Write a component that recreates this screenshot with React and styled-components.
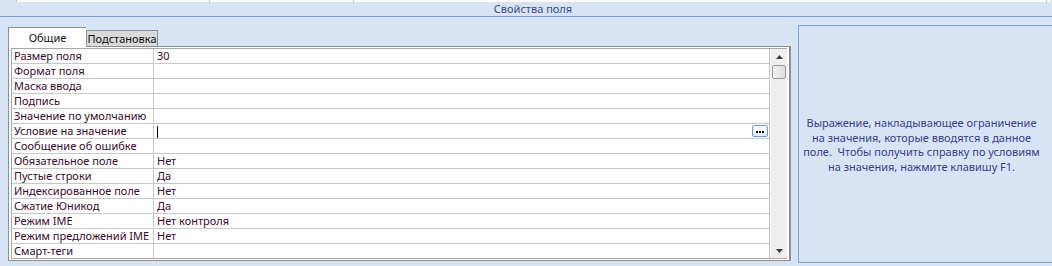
import React from "react";
import styled, { createGlobalStyle } from "styled-components";

const Global = createGlobalStyle`
  html, body { margin: 0; padding: 0; }
  body {
    width: 1052px; height: 266px; overflow: hidden;
    background: #d6e4f3;
    font-family: "Noto Sans", "Liberation Sans", sans-serif;
  }
`;

const Page = styled.div`
  width: 1052px; height: 266px; overflow: hidden;
  background: #d6e4f3;
  display: flex; flex-direction: column;
`;

const TopStrip = styled.div`
  height: 2px; display: flex;
`;
const StripCell = styled.div`
  width: ${p => p.$w}px; flex: ${p => (p.$grow ? 1 : "none")};
  background: ${p => (p.$blue ? "#d6e4f3" : "#ffffff")};
  border-right: 1px solid #c9cdd3;
`;

const Header = styled.div`
  height: 14px;
  border-bottom: 1px solid #7ea2d4;
  display: flex; align-items: center; justify-content: center;
  padding-left: 14px;
  font-size: 11px; line-height: 14px; color: #3c4a8c;
`;

const Body = styled.div`
  display: flex; align-items: flex-start;
  padding: 8px 0 0 8px;
`;

const LeftCol = styled.div`
  width: 783px; display: flex; flex-direction: column;
`;

const TabBar = styled.div`
  display: flex; align-items: flex-end;
  height: 20px; margin-top: 1px;
`;

const Tab = styled.div`
  height: ${p => (p.$active ? 20 : 16)}px;
  width: ${p => p.$w}px;
  box-sizing: border-box;
  border: 1px solid #8f8f8f;
  border-bottom: none;
  ${p => (p.$active ? "border-right: none;" : "")}
  background: ${p => (p.$active ? "#ffffff" : "#dadada")};
  display: flex; align-items: center; justify-content: center;
  font-size: 11px; line-height: 13px; color: #111111; white-space: nowrap;
  margin-bottom: ${p => (p.$active ? -1 : 0)}px;
  position: relative; z-index: ${p => (p.$active ? 1 : 0)};
`;

const Panel = styled.div`
  width: 783px; height: 215px; box-sizing: border-box;
  background: #ffffff;
  border: 1px solid #8f8f8f;
  border-right-width: 2px;
  padding: 1px 2px 2px 2px;
  display: flex;
`;

const Grid = styled.div`
  flex: 1; display: flex;
  border: 1px solid #a8a8a8;
  border-right: none;
  height: 211px; box-sizing: border-box;
`;

const Rows = styled.div`
  flex: 1; display: flex; flex-direction: column;
  border-right: 1px solid #c2c2c2;
`;

const Row = styled.div`
  height: 15px; box-sizing: border-box;
  border-bottom: 1px solid #c8c8c8;
  display: flex;
  &:last-child { border-bottom: none; }
`;

const NameCell = styled.div`
  width: 142px; box-sizing: border-box;
  border-right: 1px solid #c8c8c8;
  padding-left: 2px;
  font-size: 11px; line-height: 14px;
  color: #3a0a2c; white-space: nowrap; overflow: hidden;
`;

const ValueCell = styled.div`
  flex: 1; position: relative;
  padding-left: 3px;
  font-size: 11px; line-height: 14px;
  color: #3a0a2c; white-space: nowrap;
`;

const Caret = styled.span`
  display: inline-block; width: 1px; height: 12px;
  background: #000; vertical-align: middle; margin-top: -1px;
`;

const DotsButton = styled.div`
  position: absolute; right: 1px; top: 1px;
  width: 16px; height: 12px; box-sizing: border-box;
  border: 1px solid #6d9bd1; border-radius: 2px;
  background: linear-gradient(#ffffff, #e2ebf7);
  display: flex; align-items: flex-end; justify-content: center;
  gap: 1px; padding-bottom: 3px;
`;

const Dot = styled.span`
  width: 2px; height: 2px; background: #111;
`;

const ScrollBar = styled.div`
  width: 16px; background: #eeeeee;
  display: flex; flex-direction: column; align-items: center;
  border-left: 1px solid #f8f8f8;
`;

const Arrow = styled.div`
  height: 15px; width: 100%;
  display: flex; align-items: center; justify-content: center;
`;

const Thumb = styled.div`
  width: 14px; height: 14px; box-sizing: border-box;
  border: 1px solid #9a9a9a; border-radius: 2px;
  background: linear-gradient(90deg, #f4f4f4, #dcdcdc);
  margin-top: 1px;
`;

const Spacer = styled.div` flex: 1; `;

const InfoPanel = styled.div`
  margin-left: 7px; margin-top: 0;
  width: 260px; height: 238px; box-sizing: border-box;
  border: 1px solid #7ea2d4;
  border-right: none;
  display: flex; align-items: center; justify-content: center;
  padding: 2px 8px 0 0;
`;

const InfoText = styled.div`
  text-align: center; white-space: nowrap;
  font-size: 11px; line-height: 14.5px;
  color: #3c3c92;
`;

const rows = [
  ["Размер поля", "30"],
  ["Формат поля", ""],
  ["Маска ввода", ""],
  ["Подпись", ""],
  ["Значение по умолчанию", ""],
  ["Условие на значение", "caret"],
  ["Сообщение об ошибке", ""],
  ["Обязательное поле", "Нет"],
  ["Пустые строки", "Да"],
  ["Индексированное поле", "Нет"],
  ["Сжатие Юникод", "Да"],
  ["Режим IME", "Нет контроля"],
  ["Режим предложений IME", "Нет"],
  ["Смарт-теги", ""],
];

const UpArrow = () => (
  <svg width="7" height="4" viewBox="0 0 7 4"><path d="M3.5 0 L7 4 L0 4 Z" fill="#3a3a3a" /></svg>
);
const DownArrow = () => (
  <svg width="7" height="4" viewBox="0 0 7 4"><path d="M0 0 L7 0 L3.5 4 Z" fill="#3a3a3a" /></svg>
);

export default function App() {
  return (
    <Page>
      <Global />
      <TopStrip>
        <StripCell $w={16} $blue />
        <StripCell $w={192} />
        <StripCell $w={143} />
        <StripCell $w={692} />
        <StripCell $grow />
      </TopStrip>
      <Header>Свойства поля</Header>
      <Body>
        <LeftCol>
          <TabBar>
            <Tab $active $w={78}>Общие</Tab>
            <Tab $w={72}>Подстановка</Tab>
          </TabBar>
          <Panel>
            <Grid>
              <Rows>
                {rows.map(([n, v]) => (
                  <Row key={n}>
                    <NameCell>{n}</NameCell>
                    <ValueCell>
                      {v === "caret" ? (
                        <>
                          <Caret />
                          <DotsButton aria-label="...">
                            <Dot /><Dot /><Dot />
                          </DotsButton>
                        </>
                      ) : (
                        v
                      )}
                    </ValueCell>
                  </Row>
                ))}
              </Rows>
              <ScrollBar>
                <Arrow><UpArrow /></Arrow>
                <Thumb />
                <Spacer />
                <Arrow><DownArrow /></Arrow>
              </ScrollBar>
            </Grid>
          </Panel>
        </LeftCol>
        <InfoPanel>
          <InfoText>
            Выражение, накладывающее ограничение<br />
            на значения, которые вводятся в данное<br />
            поле.&nbsp; Чтобы получить справку по условиям<br />
            на значения, нажмите клавишу F1.
          </InfoText>
        </InfoPanel>
      </Body>
    </Page>
  );
}
